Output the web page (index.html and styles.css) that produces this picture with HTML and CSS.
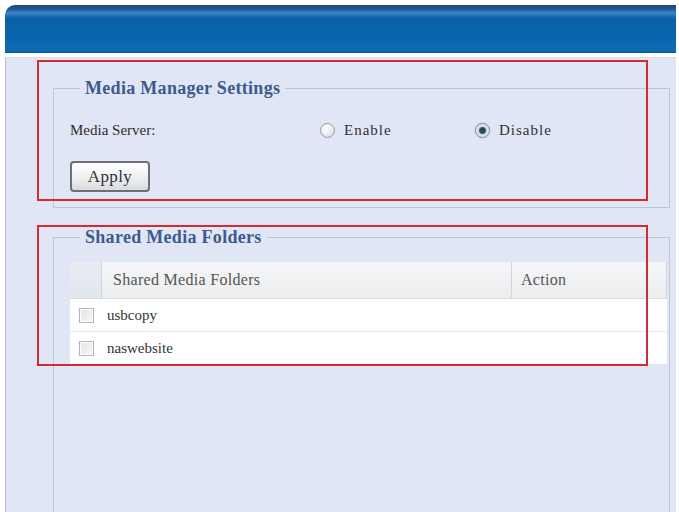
FILE: index.html
```html
<!DOCTYPE html>
<html>
<head>
<meta charset="utf-8">
<link rel="stylesheet" href="styles.css">
</head>
<body>
<div class="window">
  <div class="titlebar"></div>
  <div class="panel">
    <fieldset class="group group-settings">
      <legend class="group-title">Media Manager Settings</legend>
      <div class="setting-row">
        <span class="setting-label">Media Server:</span>
        <label class="radio-option"><span class="radio"></span><span class="radio-text">Enable</span></label>
        <label class="radio-option"><span class="radio radio-checked"></span><span class="radio-text">Disable</span></label>
      </div>
      <button class="apply-btn">Apply</button>
    </fieldset>
    <fieldset class="group group-folders">
      <legend class="group-title">Shared Media Folders</legend>
      <div class="table">
        <div class="thead">
          <div class="th th-check"></div>
          <div class="th th-name">Shared Media Folders</div>
          <div class="th th-action">Action</div>
        </div>
        <div class="tr">
          <div class="td td-check"><span class="checkbox"></span></div>
          <div class="td td-name">usbcopy</div>
          <div class="td td-action"></div>
        </div>
        <div class="tr">
          <div class="td td-check"><span class="checkbox"></span></div>
          <div class="td td-name">naswebsite</div>
          <div class="td td-action"></div>
        </div>
      </div>
    </fieldset>
  </div>
</div>
<div class="annotation annotation-one"></div>
<div class="annotation annotation-two"></div>
</body>
</html>
```

FILE: styles.css
```css
html, body {
  margin: 0;
  padding: 0;
  background: #ffffff;
  height: 512px;
  overflow: hidden;
}
body {
  font-family: "Liberation Serif", "Times New Roman", serif;
  color: #333;
  position: relative;
}
.window {
  padding: 5px 3px 0 5px;
}
.titlebar {
  height: 48px;
  border-radius: 10px 0 0 0;
  background: linear-gradient(to bottom,
    #1d4a80 0px, #1c5590 4px, #3f86c8 8px, #2474b8 10px,
    #0d5fa6 14px, #0a64aa 26px, #0b6bb1 46px, #0a5c9c 48px);
}
.panel {
  margin-top: 4px;
  height: 460px;
  background: #e0e6f6;
  border-left: 1px solid #b7bdca;
  border-top: 1px solid #d6dcea;
  padding: 0 6px 0 47px;
}
.group {
  margin: 0;
  border: 1px solid #c1c6d2;
  padding: 0 2px 0 16px;
}
.group-settings {
  margin-top: 20px;
  padding-top: 20px;
  padding-bottom: 15px;
}
.group-folders {
  margin-top: 19px;
  padding-top: 15px;
  height: 400px;
}
.group-title {
  margin-left: 10px;
  padding: 0 5px;
  font-size: 18px;
  line-height: 20px;
  font-weight: bold;
  color: #3c5b8c;
  letter-spacing: 0.3px;
}
.setting-row {
  display: flex;
  align-items: center;
  height: 24px;
  font-size: 15px;
}
.setting-label {
  width: 250px;
  color: #2e2e2e;
}
.radio-option {
  display: flex;
  align-items: center;
  width: 155px;
}
.radio {
  width: 13px;
  height: 13px;
  border-radius: 50%;
  border: 1px solid #9aa0a8;
  background: radial-gradient(circle at 40% 35%, #ffffff 0, #eceef0 50%, #c9cdd2 100%);
  margin-right: 9px;
  box-sizing: content-box;
}
.radio-checked {
  border-color: #7e8e98;
  background: radial-gradient(circle, #1f3f4c 0, #2d5563 3px, #c9d6dc 4px, #e3eaee 6px, #aab8c0 100%);
  box-shadow: 0 0 2px #a9c2cf;
}
.radio-text {
  letter-spacing: 1px;
  color: #333;
}
.apply-btn {
  display: block;
  margin-top: 19px;
  width: 80px;
  height: 31px;
  border: 2px solid #6b7078;
  border-radius: 4px;
  background: linear-gradient(to bottom, #ffffff 0%, #f0f1f2 50%, #d9dbde 100%);
  font-family: "Liberation Serif", "Times New Roman", serif;
  font-size: 17px;
  color: #333;
  padding: 0;
  letter-spacing: 0.4px;
}
.table {
  font-size: 15px;
}
.thead {
  display: flex;
  height: 36px;
  border-bottom: 1px solid #d8dade;
}
.th {
  display: flex;
  align-items: center;
  color: #555;
  font-size: 16px;
  letter-spacing: 0.3px;
}
.th-check {
  width: 31px;
  background: linear-gradient(to bottom, #e9ecf3, #e2e6ee);
  border-right: 1px solid #d0d4dc;
}
.th-name {
  flex: 1;
  padding-left: 11px;
  background: linear-gradient(to bottom, #f5f6f7, #ecedef);
  border-right: 1px solid #d2d4d8;
}
.th-action {
  width: 145px;
  padding-left: 9px;
  background: linear-gradient(to bottom, #f5f6f7, #ecedef);
  border-right: 1px solid #d2d4d8;
}
.tr {
  display: flex;
  height: 32px;
  background: #ffffff;
  border-bottom: 1px solid #e8e9ec;
}
.td {
  display: flex;
  align-items: center;
  color: #333;
}
.td-check {
  width: 31px;
  justify-content: center;
  padding-left: 1px;
  box-sizing: border-box;
}
.td-name {
  flex: 1;
  padding-left: 6px;
}
.td-action {
  width: 155px;
}
.checkbox {
  width: 13px;
  height: 13px;
  border: 1px solid #b2b5ba;
  background: linear-gradient(to bottom right, #e3e4e6, #f6f6f7);
  box-shadow: inset 0 0 0 1px #ffffff;
}
.annotation {
  position: absolute;
  left: 37px;
  width: 607px;
  border: 2px solid #d42a30;
}
.annotation-one {
  top: 60px;
  height: 137px;
}
.annotation-two {
  top: 225px;
  height: 137px;
}
```
